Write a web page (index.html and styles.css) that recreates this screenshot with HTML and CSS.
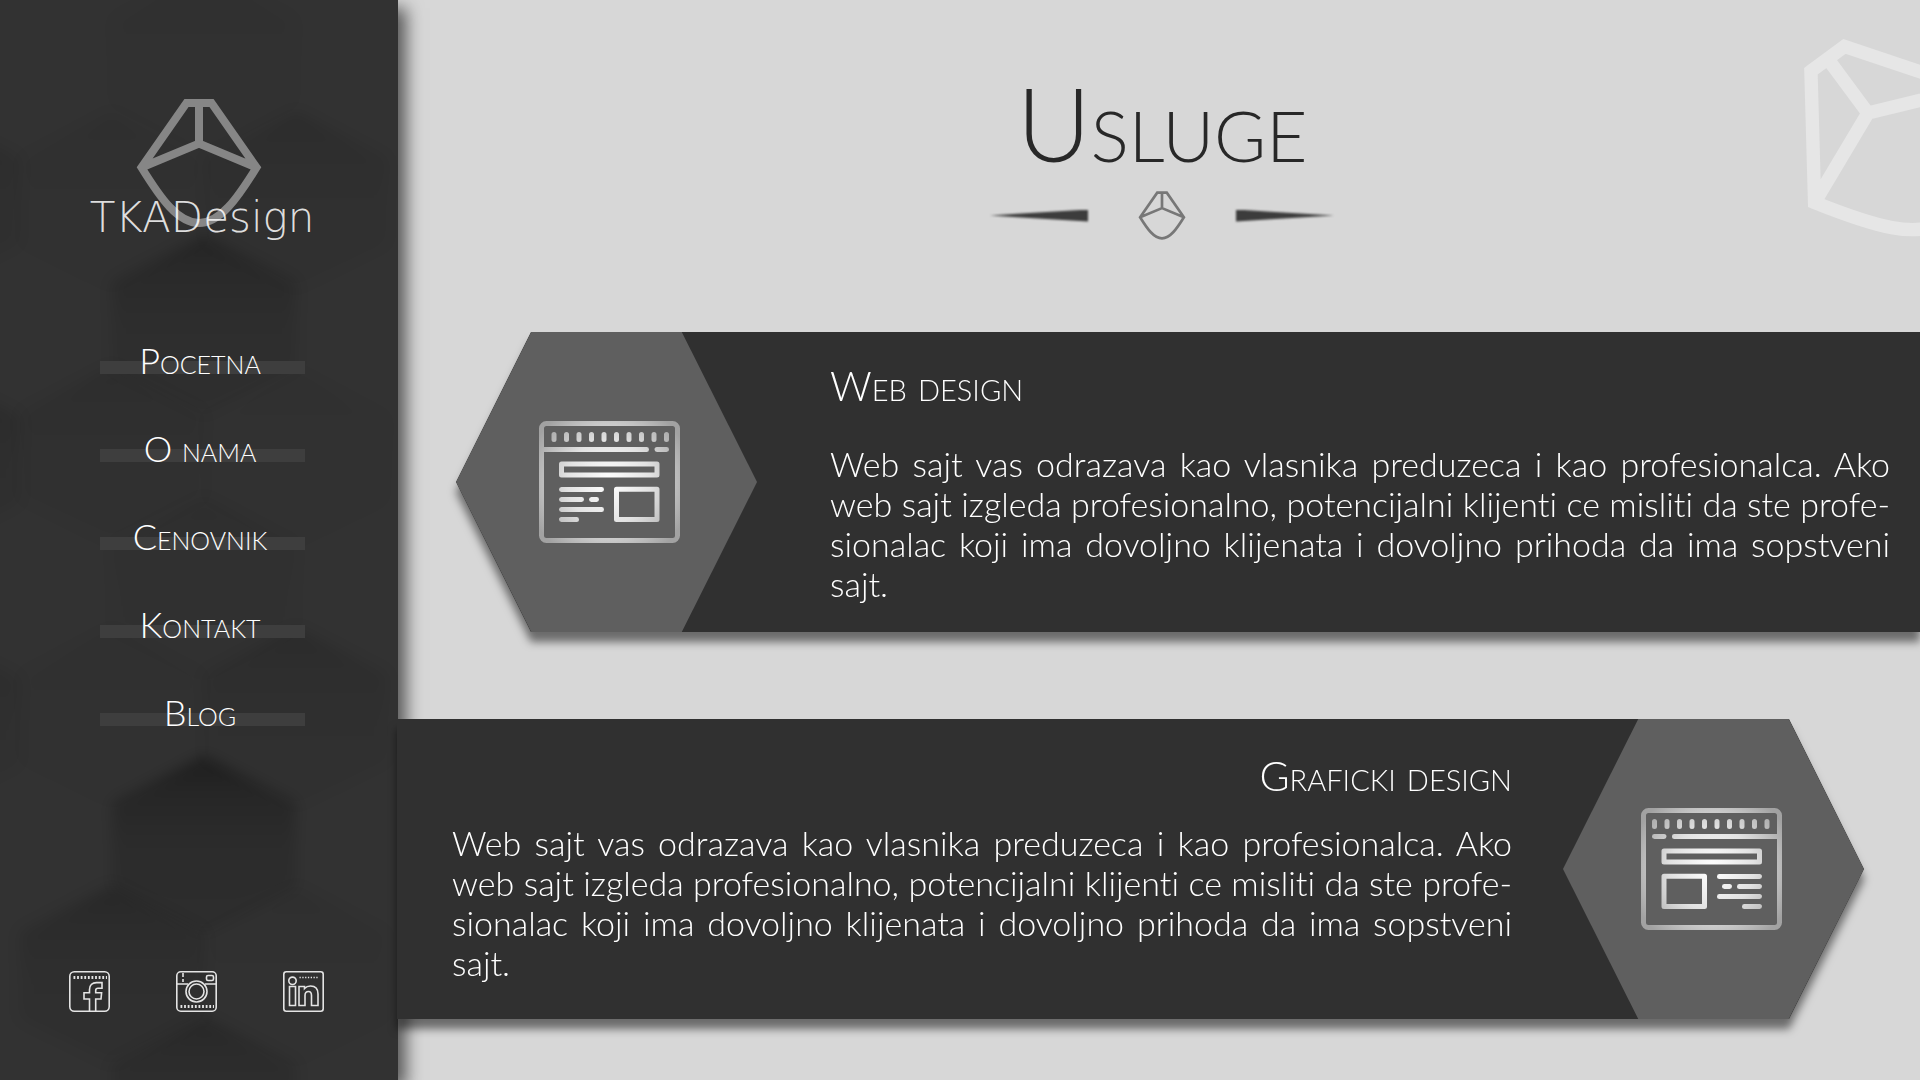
FILE: index.html
```html
<!DOCTYPE html>
<html lang="sr-Latn">
<head>
<meta charset="utf-8">
<meta name="viewport" content="width=device-width, initial-scale=1">
<title>TKADesign – Usluge</title>
<link rel="stylesheet" href="styles.css">
</head>
<body>
<svg class="sprite" aria-hidden="true">
  <defs>
    <symbol id="gem" viewBox="0 0 126 128">
      <path d="M50.500 4H75.500L120.500 68.500C101 100 84 124 63 124S25 100 5.500 68.500ZM63 4V44.500M5.500 68.500L63 44.500L120.500 68.500"/>
    </symbol>
    <linearGradient id="hexShade" x1="0" y1="0" x2="0" y2="1">
      <stop offset="0" stop-color="#000" stop-opacity=".42"/>
      <stop offset=".2" stop-color="#000" stop-opacity=".24"/>
      <stop offset=".5" stop-color="#000" stop-opacity=".13"/>
      <stop offset="1" stop-color="#000" stop-opacity=".1"/>
    </linearGradient>
    <filter id="soft" x="-20%" y="-20%" width="140%" height="140%"><feGaussianBlur stdDeviation="7"/></filter>
    <path id="hex" d="M0 0L92 46V132L0 178L-92 132V46Z" fill="url(#hexShade)" filter="url(#soft)"/>
    <radialGradient id="metal" gradientUnits="userSpaceOnUse" cx="70" cy="61" r="84">
      <stop offset="0" stop-color="#fff"/>
      <stop offset=".5" stop-color="#e2e2e2"/>
      <stop offset="1" stop-color="#a2a2a2"/>
    </radialGradient>
    <g id="browser" fill="none" stroke="url(#metal)" stroke-width="5" stroke-linecap="round" stroke-linejoin="round">
      <rect x="2.500" y="2.500" width="136" height="117" rx="5"/>
      <path d="M15 13.500v5M27.500 13.500v5M40 13.500v5M52.500 13.500v5M65 13.500v5M77.500 13.500v5M90 13.500v5M102.500 13.500v5M115 13.500v5M127.500 13.500v5"/>
      <path d="M5 28.500L107.500 28.400M118 28.500L127.500 28.400"/>
      <rect x="22.500" y="43" width="95.500" height="11"/>
      <path d="M22.500 68.500L62.500 68.400M22.500 78.500L42.500 78.400M52.500 78.500L57.500 78.400M22.500 88.500L62.500 88.400M22.500 98.500L37.500 98.400"/>
      <rect x="77.500" y="68.300" width="40.500" height="30.200"/>
    </g>
  </defs>
</svg>

<div class="layout">
  <aside class="sidebar">
    <svg class="sidebar-pattern" viewBox="0 0 398 1080" preserveAspectRatio="xMidYMin slice" aria-hidden="true">
      <use href="#hex" x="204" y="-28" opacity=".12"/>
      <use href="#hex" x="112" y="112" opacity=".15"/>
      <use href="#hex" x="296" y="112" opacity=".3"/>
      <use href="#hex" x="-72" y="112" opacity=".4"/>
      <use href="#hex" x="204" y="236" opacity=".65"/>
      <use href="#hex" x="112" y="366" opacity=".25"/>
      <use href="#hex" x="296" y="370" opacity=".1"/>
      <use href="#hex" x="-72" y="370" opacity=".5"/>
      <use href="#hex" x="204" y="498" opacity=".2"/>
      <use href="#hex" x="112" y="628" opacity=".12"/>
      <use href="#hex" x="296" y="628" opacity=".35"/>
      <use href="#hex" x="-72" y="632" opacity=".35"/>
      <use href="#hex" x="204" y="756"/>
      <use href="#hex" x="112" y="886" opacity=".5"/>
      <use href="#hex" x="296" y="886" opacity=".15"/>
      <use href="#hex" x="204" y="1018" opacity=".5"/>
    </svg>

    <a class="brand" href="#">
      <svg class="brand-mark" aria-hidden="true"><use href="#gem"/></svg>
      <span class="brand-name">TKADesign</span>
    </a>

    <nav class="menu">
      <a href="#">Pocetna</a>
      <a href="#">O nama</a>
      <a href="#">Cenovnik</a>
      <a href="#">Kontakt</a>
      <a href="#">Blog</a>
    </nav>

    <div class="social">
      <a href="#" aria-label="Facebook">
        <svg viewBox="0 0 41 41"><rect x=".8" y=".8" width="39.400" height="39.400" rx="4.500"/>
          <path d="M4.500 6.500H38" stroke-width="3" stroke-dasharray="1.800 1.800"/>
          <path d="M20.500 40V28H15V21.800H20.500V18.500C20.500 14 23.500 11.600 27.500 11.600H33V17.300H29C27.500 17.300 26.700 18 26.700 19.500V21.800H32.600L32 28H26.700V40"/></svg>
      </a>
      <a href="#" aria-label="Instagram">
        <svg viewBox="0 0 41 41"><rect x=".8" y=".8" width="39.400" height="39.400" rx="4"/>
          <path d="M1 13H12M29 13H40M7 2V6M7 8V11"/>
          <rect x="30.500" y="4.500" width="7" height="5" rx="1.500"/>
          <circle cx="20.500" cy="20.500" r="10.500"/><circle cx="20.500" cy="20.500" r="7.500"/>
          <path d="M4.500 35.500H38" stroke-width="3" stroke-dasharray="1.800 1.800"/></svg>
      </a>
      <a href="#" aria-label="LinkedIn">
        <svg viewBox="0 0 41 41"><rect x=".8" y=".8" width="39.400" height="39.400" rx="2.500"/>
          <path d="M16.500 6.500H35" stroke-width="1.500" stroke-dasharray="1.300 1.500"/>
          <circle cx="9.500" cy="9.800" r="3.700"/>
          <path d="M6.500 15.500H12.500V34.500H6.500ZM16 15.500H21.500V17.500C23 15.800 25 15 27.500 15C32 15 35 17.500 35 23V34.500H28.500V24.500C28.500 21.500 27.500 20.500 25.500 20.500C23 20.500 22 22 22 24.500V34.500H16Z"/></svg>
      </a>
    </div>
  </aside>

  <main class="content">
    <svg class="corner-mark" viewBox="0 0 160 260" aria-hidden="true">
      <g transform="translate(44 68) rotate(-36.500) scale(1.670) translate(-48.300 0)">
        <path d="M50.500 4H75.500L120.500 68.500C101 100 84 124 63 124S25 100 5.500 68.500ZM63 4V44.500M5.500 68.500L63 44.500L120.500 68.500"/>
      </g>
    </svg>

    <header class="page-head">
      <h1>Usluge</h1>
      <div class="divider" aria-hidden="true">
        <span class="spike spike-left"></span>
        <svg class="divider-mark"><use href="#gem"/></svg>
        <span class="spike spike-right"></span>
      </div>
    </header>

    <div class="services">
      <article class="service service-right">
        <div class="panel">
          <div class="badge">
            <svg viewBox="0 0 141 122" aria-hidden="true"><use href="#browser"/></svg>
          </div>
          <div class="copy">
            <h2>Web design</h2>
            <p>Web sajt vas odrazava kao vlasnika preduzeca i kao profesionalca. Ako web sajt izgleda profesionalno, potencijalni klijenti ce misliti da ste profe&shy;sionalac koji ima dovoljno klijenata i dovoljno prihoda da ima sopstveni sajt.</p>
          </div>
        </div>
      </article>

      <article class="service service-left">
        <div class="panel">
          <div class="copy">
            <h2>Graficki design</h2>
            <p>Web sajt vas odrazava kao vlasnika preduzeca i kao profesionalca. Ako web sajt izgleda profesionalno, potencijalni klijenti ce misliti da ste profe&shy;sionalac koji ima dovoljno klijenata i dovoljno prihoda da ima sopstveni sajt.</p>
          </div>
          <div class="badge">
            <svg viewBox="0 0 141 122" aria-hidden="true"><use href="#browser" transform="translate(141 0) scale(-1 1)"/></svg>
          </div>
        </div>
      </article>
    </div>
  </main>
</div>
</body>
</html>
```
FILE: styles.css
```css
* {
  box-sizing: border-box;
}

body {
  margin: 0;
  background: #d7d7d7;
  color: #fff;
  font-family: Lato, "Open Sans", sans-serif;
  font-weight: 300;
}

a {
  color: inherit;
  text-decoration: none;
}

h1,
h2,
p {
  margin: 0;
  font-weight: 300;
}

.sprite {
  position: absolute;
  width: 0;
  height: 0;
}

.layout {
  display: grid;
  grid-template-columns: 398px 1fr;
  min-height: 100vh;
}

/* Sidebar */
.sidebar {
  position: relative;
  display: flex;
  flex-direction: column;
  align-items: center;
  padding: 99px 0 68px;
  background: #323232;
  box-shadow: 8px 8px 16px rgba(0, 0, 0, .6);
}

.sidebar-pattern {
  position: absolute;
  inset: 0;
  width: 100%;
  height: 100%;
}

.brand,
.menu,
.social {
  position: relative;
}

.brand {
  display: grid;
  justify-items: center;
}

.brand-mark,
.brand-name {
  grid-area: 1 / 1;
}

.brand-mark {
  width: 126px;
  height: 128px;
  fill: none;
  stroke: #868686;
  stroke-width: 8px;
}

.brand-name {
  padding: 94px 0 0 6px;
  color: rgba(255, 255, 255, .85);
  font: 200 42px/50px "DejaVu Sans", sans-serif;
}

.menu {
  display: flex;
  flex-direction: column;
  gap: 44px;
  width: 205px;
  margin: 95px 0 40px 6px;
  text-align: center;
}

.menu a {
  padding-right: 4px;
  background: linear-gradient(#3e3e3e, #3e3e3e) 0 23px / 100% 13px no-repeat;
  font-size: 36px;
  line-height: 44px;
  font-variant: small-caps;
}

.social {
  display: flex;
  gap: 66px;
  margin: auto 5px 0 0;
}

.social svg {
  display: block;
  width: 41px;
  height: 41px;
  fill: none;
  stroke: #e4e4e4;
  stroke-width: 1.600;
}

/* Content */
.content {
  position: relative;
  padding: 63px 0 61px;
}

.corner-mark {
  position: absolute;
  top: 0;
  right: 0;
  width: 160px;
  height: 260px;
  fill: none;
  stroke: #e6e6e6;
  stroke-width: 8px;
}

.page-head {
  display: flex;
  flex-direction: column;
  align-items: center;
  gap: 8px;
  padding-left: 6px;
}

h1 {
  color: #282828;
  font-size: 102px;
  line-height: 120px;
  font-variant: small-caps;
}

.divider {
  display: flex;
  align-items: center;
  gap: 50px;
}

.divider-mark {
  width: 48px;
  height: 49px;
  fill: none;
  stroke: #777;
  stroke-width: 7px;
}

.spike {
  width: 98px;
  height: 12px;
  filter: blur(1px);
}

.spike::before {
  content: "";
  display: block;
  height: 100%;
  background: #3c3c3c;
}

.spike-left::before {
  clip-path: polygon(0 50%, 100% 0, 100% 100%);
}

.spike-right::before {
  clip-path: polygon(0 0, 100% 50%, 0 100%);
}

.services {
  display: grid;
  gap: 87px;
  margin-top: 92px;
}

.service {
  filter: drop-shadow(0 10px 4px rgba(0, 0, 0, .5));
}

.service-right {
  margin-left: 58px;
}

.service-left {
  margin: 0 56px 0 -1px;
}

.panel {
  display: flex;
  min-height: 300px;
  background: #303030;
}

.service-right .panel {
  clip-path: polygon(75px 0, 100% 0, 100% 100%, 75px 100%, 0 50%);
}

.service-left .panel {
  clip-path: polygon(0 0, calc(100% - 75px) 0, 100% 50%, calc(100% - 75px) 100%, 0 100%);
}

.badge {
  flex: none;
  display: grid;
  place-items: center;
  width: 301px;
  background: #5f5f5f;
  clip-path: polygon(25% 0, 75% 0, 100% 50%, 75% 100%, 25% 100%, 0 50%);
}

.service-right .badge {
  padding-left: 6px;
}

.service-left .badge {
  padding-right: 4px;
}

.badge svg {
  width: 141px;
  height: 122px;
}

.copy {
  flex: 1;
  display: grid;
  align-content: start;
  gap: 34px;
  padding: 30px 30px 28px 73px;
}

.service-left .copy {
  gap: 23px;
  padding: 33px 51px 28px 55px;
}

.service-left h2 {
  text-align: right;
}

h2 {
  font-size: 41px;
  line-height: 48px;
  font-variant: small-caps;
}

p {
  font-size: 34px;
  line-height: 40px;
  text-align: justify;
  font-variant-ligatures: none;
}
```
